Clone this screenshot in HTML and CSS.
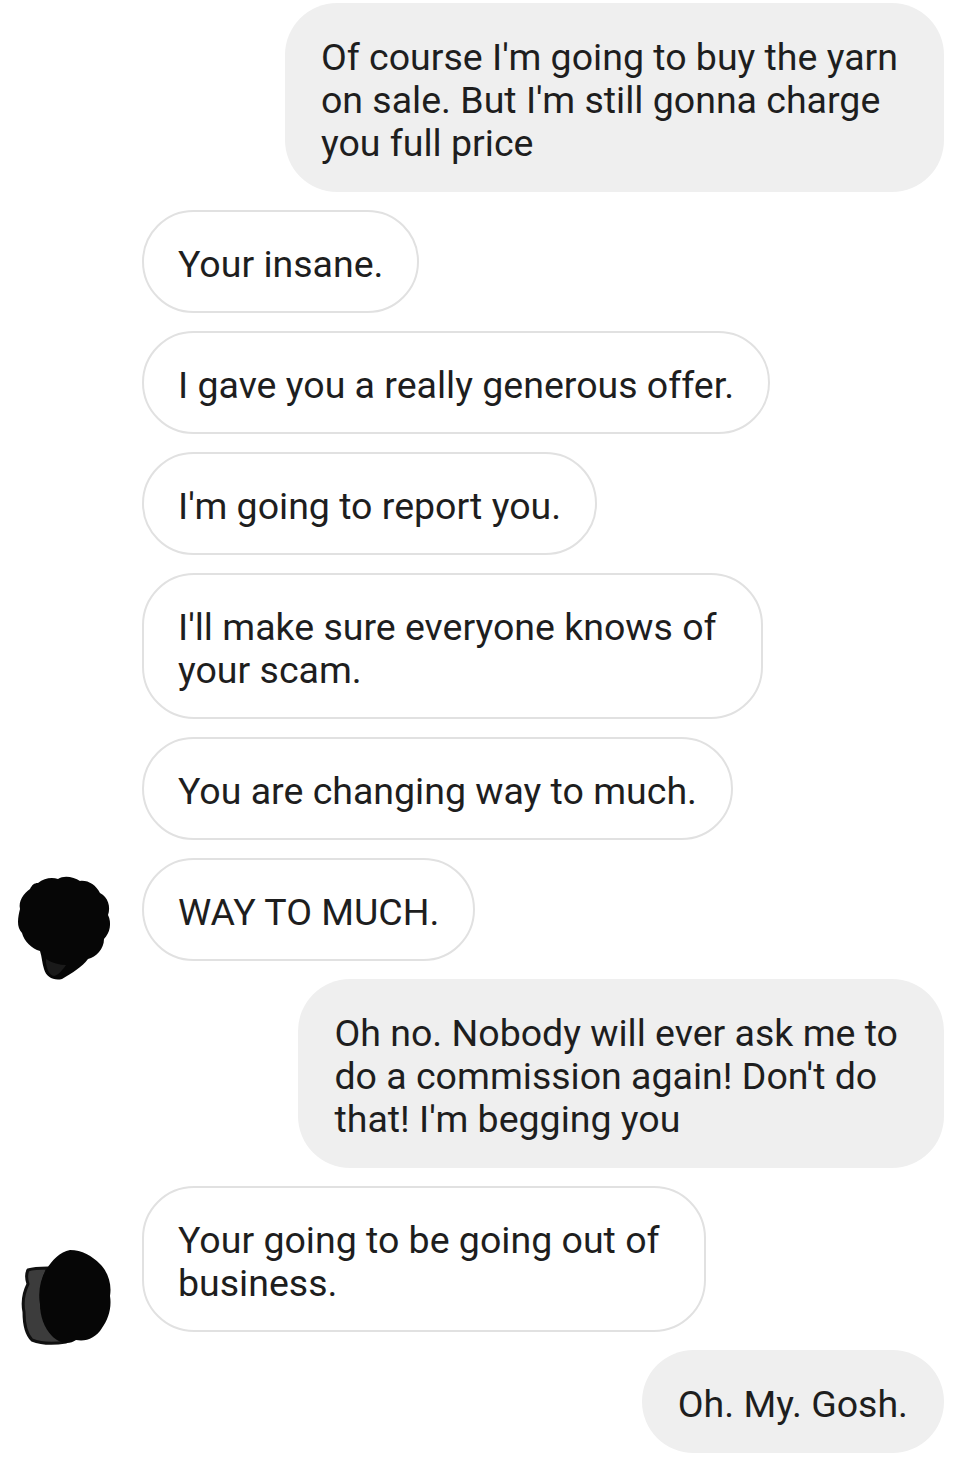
FILE: index.html
```html
<!DOCTYPE html>
<html>
<head>
<meta charset="utf-8">
<link rel="stylesheet" href="styles.css">
</head>
<body>
<div class="chat">
  <div class="row sent">
    <div class="bubble out multi">Of course I'm going to buy the yarn<br>on sale. But I'm still gonna charge<br>you full price</div>
  </div>
  <div class="row recv">
    <div class="slot"></div>
    <div class="bubble in">Your insane.</div>
  </div>
  <div class="row recv">
    <div class="slot"></div>
    <div class="bubble in">I gave you a really generous offer.</div>
  </div>
  <div class="row recv">
    <div class="slot"></div>
    <div class="bubble in">I'm going to report you.</div>
  </div>
  <div class="row recv">
    <div class="slot"></div>
    <div class="bubble in multi">I'll make sure everyone knows of<br>your scam.</div>
  </div>
  <div class="row recv">
    <div class="slot"></div>
    <div class="bubble in">You are changing way to much.</div>
  </div>
  <div class="row recv">
    <div class="slot">
      <svg class="avatar a1" width="96" height="106" viewBox="0 0 96 106">
        <path d="M22 8 C28 3 36 2 42 4 C48 0 58 2 64 6 C72 5 80 10 84 18 C92 22 95 32 92 40 C96 48 94 58 88 64 C88 74 80 82 72 84 C66 92 56 98 46 104 C38 106 30 102 28 94 C26 88 26 82 24 76 C16 74 8 66 6 58 C0 52 2 42 4 34 C2 26 8 18 14 14 C16 10 18 8 22 8 Z" fill="#060606"/>
        <path d="M30 84 C36 88 44 90 50 90 C46 96 42 100 38 101 C33 100 31 94 30 88 Z" fill="#1a1a1a"/>
      </svg>
    </div>
    <div class="bubble in">WAY TO MUCH.</div>
  </div>
  <div class="row sent">
    <div class="bubble out multi">Oh no. Nobody will ever ask me to<br>do a commission again! Don't do<br>that! I'm begging you</div>
  </div>
  <div class="row recv">
    <div class="slot">
      <svg class="avatar a2" width="96" height="98" viewBox="0 0 96 98">
        <path d="M10 22 C16 20 24 20 30 20 C24 32 22 46 24 60 C28 74 36 86 48 94 C36 96 24 96 14 92 C8 86 6 76 6 64 C4 54 6 44 10 36 C8 30 8 26 10 22 Z" fill="#3c3c3c" stroke="#101010" stroke-width="3" stroke-linejoin="round"/>
        <path d="M52 2 C64 2 74 8 82 16 C90 24 94 36 92 48 C94 60 90 72 84 80 C78 90 68 94 58 92 C50 98 40 94 34 88 C26 80 22 68 22 56 C20 44 22 32 28 22 C34 12 42 4 52 2 Z" fill="#060606"/>
      </svg>
    </div>
    <div class="bubble in multi">Your going to be going out of<br>business.</div>
  </div>
  <div class="row sent">
    <div class="bubble out">Oh. My. Gosh.</div>
  </div>
</div>
</body>
</html>
```

FILE: styles.css
```css
html, body {
  margin: 0;
  padding: 0;
  background: #ffffff;
}

.chat {
  display: flex;
  flex-direction: column;
  gap: 18px;
  padding: 3px 36px 0 0;
  font-family: Roboto, "Liberation Sans", sans-serif;
  font-size: 37.5px;
  line-height: 43px;
  color: #1e1e1e;
}

.row {
  display: flex;
  align-items: flex-end;
}

.row.sent {
  justify-content: flex-end;
}

.slot {
  width: 142px;
  flex: 0 0 142px;
  display: flex;
  justify-content: flex-start;
}

.bubble {
  border-radius: 52px;
  padding: 33px 36px 27px;
  white-space: nowrap;
  box-sizing: border-box;
}

.bubble.multi {
  padding-right: 46px;
}

.bubble.out {
  background: #efefef;
}

.bubble.in {
  background: #ffffff;
  border: 2px solid #e1e1e1;
  padding: 31px 34px 25px;
}

.bubble.in.multi {
  padding-right: 44px;
}

.avatar {
  display: block;
}

.avatar.a1 {
  margin: 0 0 -20px 16px;
}

.avatar.a2 {
  margin: 0 0 -14px 18px;
}
```
